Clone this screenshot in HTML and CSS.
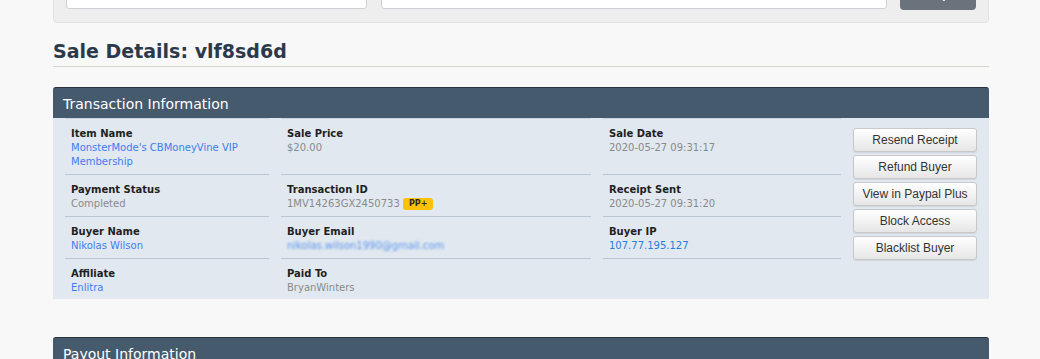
FILE: index.html
```html
<!DOCTYPE html>
<html lang="en">
<head>
    <meta charset="UTF-8">
    <meta name="viewport" content="width=device-width, initial-scale=1.0">
    <title>Sale Details</title>
    <link rel="stylesheet" href="styles.css">
</head>
<body>
    <div class="container">
        <div class="search-bar">
            <input class="search-input short" type="text">
            <input class="search-input long" type="text">
            <button class="search-button">
                <svg width="14" height="14" viewBox="0 0 14 14"><circle cx="6" cy="6" r="4.5" fill="none" stroke="#fff" stroke-width="2"/><path d="M9.3 9.3 13 13" stroke="#fff" stroke-width="2" stroke-linecap="round"/></svg>
            </button>
        </div>

        <h1 class="page-title">Sale Details: vlf8sd6d</h1>

        <div class="panel">
            <div class="panel-header">Transaction Information</div>
            <div class="panel-body">
                <div class="info-grid">
                    <div class="info-cell">
                        <div class="info-label">Item Name</div>
                        <a class="info-link" href="#">MonsterMode's CBMoneyVine VIP Membership</a>
                    </div>
                    <div class="info-cell">
                        <div class="info-label">Sale Price</div>
                        <div class="info-value">$20.00</div>
                    </div>
                    <div class="info-cell">
                        <div class="info-label">Sale Date</div>
                        <div class="info-value">2020-05-27 09:31:17</div>
                    </div>

                    <div class="info-cell">
                        <div class="info-label">Payment Status</div>
                        <div class="info-value">Completed</div>
                    </div>
                    <div class="info-cell">
                        <div class="info-label">Transaction ID</div>
                        <div class="info-value">1MV14263GX2450733 <span class="badge">PP+</span></div>
                    </div>
                    <div class="info-cell">
                        <div class="info-label">Receipt Sent</div>
                        <div class="info-value">2020-05-27 09:31:20</div>
                    </div>

                    <div class="info-cell">
                        <div class="info-label">Buyer Name</div>
                        <a class="info-link" href="#">Nikolas Wilson</a>
                    </div>
                    <div class="info-cell">
                        <div class="info-label">Buyer Email</div>
                        <div class="info-value"><span class="blurred">nikolas.wilson1990@gmail.com</span></div>
                    </div>
                    <div class="info-cell">
                        <div class="info-label">Buyer IP</div>
                        <a class="info-link ip" href="#">107.77.195.127</a>
                    </div>

                    <div class="info-cell last">
                        <div class="info-label">Affiliate</div>
                        <a class="info-link" href="#">Enlitra</a>
                    </div>
                    <div class="info-cell last">
                        <div class="info-label">Paid To</div>
                        <div class="info-value">BryanWinters</div>
                    </div>
                    <div class="info-cell last empty"></div>
                </div>

                <div class="actions">
                    <button class="action-button">Resend Receipt</button>
                    <button class="action-button">Refund Buyer</button>
                    <button class="action-button">View in Paypal Plus</button>
                    <button class="action-button">Block Access</button>
                    <button class="action-button">Blacklist Buyer</button>
                </div>
            </div>
        </div>

        <div class="panel next">
            <div class="panel-header">Payout Information</div>
            <div class="panel-body tall"></div>
        </div>
    </div>
</body>
</html>
```

FILE: styles.css
```css
body {
    margin: 0;
    background: #f8f8f8;
    font-family: "DejaVu Sans", Verdana, sans-serif;
    overflow: hidden;
}
.container {
    width: 936px;
    margin-left: 53px;
}
.search-bar {
    display: flex;
    gap: 13px;
    margin-top: -38px;
    padding: 12px 12px 12px;
    background: #eeeeee;
    border: 1px solid #e2e2e2;
    border-radius: 4px;
}
.search-input {
    height: 34px;
    box-sizing: border-box;
    border: 1px solid #cdd1d6;
    border-radius: 3px;
    background: #fff;
}
.search-input.short {
    width: 301px;
    margin-right: 1px;
}
.search-input.long {
    width: 506px;
}
.search-button {
    width: 76px;
    height: 35px;
    border: none;
    border-radius: 4px;
    background: #6a727b;
    padding-top: 6px;
}
.page-title {
    margin: 16px 0 0;
    padding-bottom: 3px;
    font-size: 19px;
    line-height: 24px;
    font-weight: bold;
    color: #2b3a4b;
    border-bottom: 1px solid #d6d6cf;
}
.panel {
    margin-top: 20px;
}
.panel.next {
    margin-top: 38px;
}
.panel-header {
    padding: 6px 10px 4px;
    font-size: 14px;
    line-height: 20px;
    color: #fff;
    background: #465a6e;
    border-top: 1px solid #27323d;
    border-radius: 3px 3px 0 0;
}
.panel-body {
    display: flex;
    padding: 0 12px;
    background: #e1e8ef;
}
.panel-body.tall {
    height: 60px;
}
.info-grid {
    display: grid;
    grid-template-columns: 204px 310px 238px;
    column-gap: 12px;
}
.info-cell {
    padding: 8px 6px 5px;
    font-size: 10px;
    line-height: 14px;
    border-top: 1px solid #cad4de;
    border-bottom: 1px solid #b9c5d1;
}
.info-cell.last {
    padding-bottom: 4px;
    border-bottom: none;
}
.info-cell:nth-child(n+4) {
    border-top: none;
}
.info-label {
    font-weight: bold;
    color: #1f1f1f;
}
.info-value {
    color: #8a8a8a;
}
.info-link {
    display: block;
    color: #3f7cf2;
    text-decoration: none;
}
.info-link.ip {
    color: #1f7fe0;
}
.badge {
    display: inline-block;
    padding: 0 6px;
    height: 12px;
    line-height: 12px;
    font-size: 8px;
    font-weight: bold;
    color: #2a2a2a;
    background: #ffc107;
    border-radius: 3px;
    vertical-align: middle;
}
.blurred {
    color: #5e96ee;
    filter: blur(1.3px);
}
.actions {
    display: flex;
    flex-direction: column;
    gap: 3px;
    width: 124px;
    margin-left: 12px;
    padding-top: 10px;
}
.action-button {
    height: 24px;
    padding: 4px 0;
    font-family: "Liberation Sans", Arial, sans-serif;
    font-size: 12px;
    line-height: 14px;
    color: #333;
    background: linear-gradient(#ffffff, #e6e6e6);
    border: 1px solid #c8c8c8;
    border-radius: 3px;
    box-shadow: 0 1px 1px rgba(0, 0, 0, 0.08);
    cursor: pointer;
}
```
